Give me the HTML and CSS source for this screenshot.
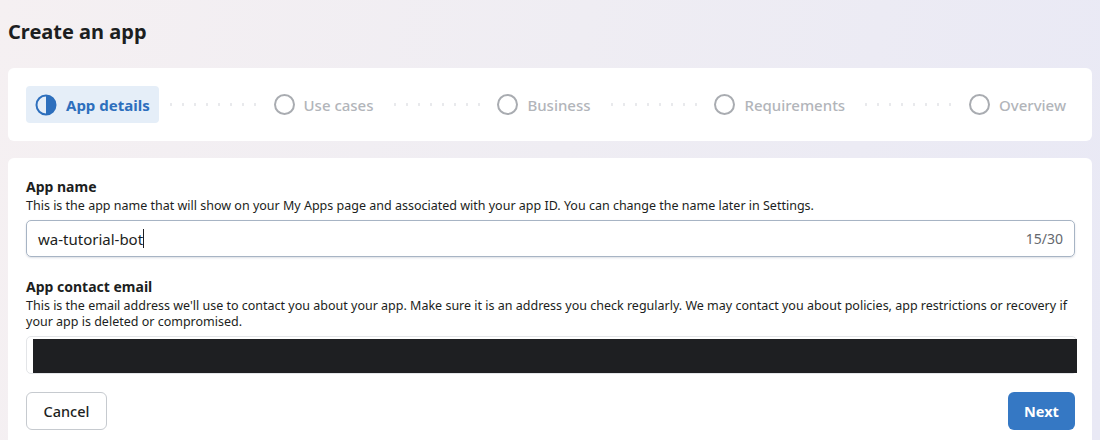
FILE: index.html
```html
<!DOCTYPE html>
<html lang="en">
<head>
<meta charset="utf-8">
<title>Create an app</title>
<link rel="stylesheet" href="styles.css">
</head>
<body>
<div class="page">
  <h1 class="title">Create an app</h1>

  <nav class="stepper">
    <div class="step step-active">
      <svg class="step-icon" viewBox="0 0 22 22" width="22" height="22">
        <circle cx="11" cy="11" r="9.5" fill="none" stroke="#2d6fbd" stroke-width="2"/>
        <path d="M11 1.5 A9.5 9.5 0 0 1 11 20.5 Z" fill="#2d6fbd"/>
      </svg>
      <span>App details</span>
    </div>
    <div class="connector"></div>
    <div class="step">
      <span class="ring"></span><span>Use cases</span>
    </div>
    <div class="connector"></div>
    <div class="step">
      <span class="ring"></span><span>Business</span>
    </div>
    <div class="connector"></div>
    <div class="step">
      <span class="ring"></span><span>Requirements</span>
    </div>
    <div class="connector"></div>
    <div class="step">
      <span class="ring"></span><span>Overview</span>
    </div>
  </nav>

  <section class="form-card">
    <div class="field">
      <div class="label">App name</div>
      <div class="hint">This is the app name that will show on your My Apps page and associated with your app ID. You can change the name later in Settings.</div>
      <div class="input input-focus">
        <span class="value">wa-tutorial-bot<span class="caret"></span></span>
        <span class="counter">15/30</span>
      </div>
    </div>

    <div class="field field-last">
      <div class="label">App contact email</div>
      <div class="hint">This is the email address we'll use to contact you about your app. Make sure it is an address you check regularly. We may contact you about policies, app restrictions or recovery if your app is deleted or compromised.</div>
      <div class="input input-email">
        <div class="redacted"></div>
      </div>
    </div>

    <div class="actions">
      <button class="btn btn-secondary">Cancel</button>
      <button class="btn btn-primary">Next</button>
    </div>
  </section>
</div>
</body>
</html>
```

FILE: styles.css
```css
* { box-sizing: border-box; }

html, body {
  margin: 0;
  height: 100%;
}

body {
  font-family: "Noto Sans", "Open Sans", sans-serif;
  color: #1c1e21;
  background: linear-gradient(100deg, #f5f0f2 0%, #efedf3 50%, #e9e9f5 100%);
  overflow: hidden;
}

.page {
  padding: 0 8px;
}

.title {
  margin: 0;
  padding-top: 18px;
  font-size: 20px;
  line-height: 28px;
  font-weight: 700;
  color: #1c1e21;
  margin-bottom: 22px;
}

/* stepper */
.stepper {
  display: flex;
  align-items: center;
  background: #fff;
  border-radius: 6px;
  padding: 18px 17px 18px 18px;
  margin-bottom: 17px;
}

.step {
  display: flex;
  align-items: center;
  gap: 9px;
  height: 37px;
  padding: 0 9px;
  border-radius: 4px;
  font-size: 15px;
  font-weight: 500;
  color: #b2b5ba;
  white-space: nowrap;
}

.step-active {
  background: #e5eef8;
  color: #2d6fbd;
  font-weight: 700;
}

.step-icon {
  display: block;
  flex: none;
}

.ring {
  width: 21px;
  height: 21px;
  border: 2px solid #a9acb1;
  border-radius: 50%;
  flex: none;
}

.connector {
  flex: 1;
  height: 3px;
  margin: 0 6px;
  background-image: radial-gradient(circle, #e8e9ec 1.1px, transparent 1.4px);
  background-size: 12px 3px;
  background-repeat: repeat-x;
}

/* form */
.form-card {
  background: #fff;
  border-radius: 6px 6px 0 0;
  padding: 20px 17px 30px 18px;
  min-height: 300px;
}

.field {
  margin-bottom: 21px;
}

.field-last {
  margin-bottom: 18px;
}

.label {
  font-size: 14px;
  font-weight: 700;
  line-height: 18px;
}

.hint {
  font-size: 12.5px;
  line-height: 16px;
  color: #1c1e21;
  margin-top: 2px;
  margin-bottom: 6px;
}

.input {
  display: flex;
  align-items: center;
  justify-content: space-between;
  height: 37px;
  border: 1px solid #c9ced6;
  border-radius: 5px;
  padding: 0 11px;
  font-size: 15px;
}

.input-focus {
  border: 1.5px solid #a7b4c4;
  box-shadow: 0 1px 2px rgba(60, 80, 110, 0.18);
}

.value {
  color: #1c1e21;
  display: flex;
  align-items: center;
}

.caret {
  display: inline-block;
  width: 1px;
  height: 19px;
  background: #1c1e21;
  margin-left: 0;
}

.counter {
  font-size: 14px;
  color: #65686e;
}

.input-email {
  height: 38px;
  padding: 2px 0 0 6px;
  align-items: stretch;
  border-color: #e3e5e8;
  margin-right: -2px;
}

.redacted {
  flex: 1;
  background: #1e1f22;
  margin-right: -1px;
}

.actions {
  display: flex;
  justify-content: space-between;
}

.btn {
  font-family: inherit;
  font-size: 14.5px;
  font-weight: 500;
  height: 38px;
  border-radius: 6px;
  padding: 0 16px;
  cursor: pointer;
}

.btn-secondary {
  width: 81px;
  background: #fff;
  color: #1c1e21;
  border: 1px solid #c6cacf;
}

.btn-primary {
  width: 67px;
  background: #3578c4;
  color: #fff;
  font-weight: 700;
  border: none;
}
```
